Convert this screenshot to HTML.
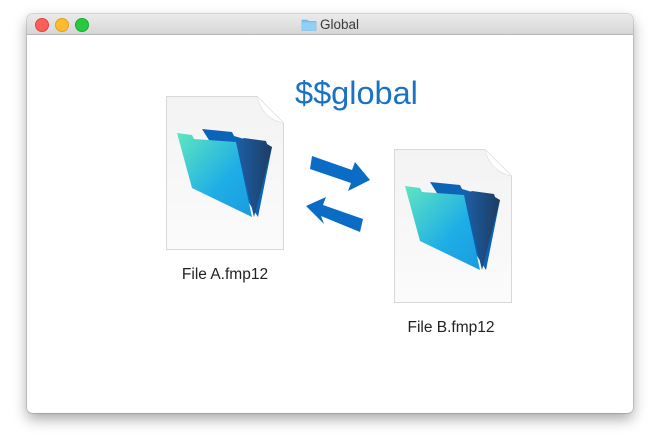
<!DOCTYPE html>
<html><head><style>
body{margin:0;width:660px;height:440px;background:#fff;overflow:hidden;font-family:"Liberation Sans",sans-serif;position:relative}
.win{position:absolute;left:27px;top:14px;width:606px;height:399px;background:#fff;border-radius:5px;box-shadow:0 6px 14px rgba(0,0,0,.35),0 0 0 .5px rgba(0,0,0,.25);overflow:hidden}
.tb{height:20px;background:linear-gradient(#ebebeb,#d6d6d6);border-bottom:1px solid #b8b8b8;position:relative}
.dot{position:absolute;top:4px;width:12px;height:12px;border-radius:50%}
.title{position:absolute;left:0;right:0;top:3px;text-align:center;font-size:13.5px;color:#3a3a3a}
.lbl{position:absolute;font-size:15.5px;color:#222;text-align:center;width:160px}
</style></head><body>
<div class="win">
<div class="tb">
<div class="dot" style="left:8px;background:#fc5f57;border:.5px solid #e0443e"></div>
<div class="dot" style="left:28px;background:#fdbc2e;border:.5px solid #dea123"></div>
<div class="dot" style="left:48px;background:#28c83f;border:.5px solid #1aab29"></div>
<div class="title"><svg width="16" height="13" viewBox="0 0 16 13" style="vertical-align:-2px;margin-right:3px"><path d="M1 2h5l1.5 1.5H15v9H1z" fill="#7cc3f2" stroke="#5aa8e0" stroke-width=".6"/><path d="M1 4.5h14v8H1z" fill="#8fd0f7"/></svg>Global</div>
</div>
</div>
<svg width="0" height="0" style="position:absolute"><defs>
<linearGradient id="g1" x1="0" y1="0" x2="1" y2="1"><stop offset="0" stop-color="#5fe6c0"/><stop offset=".6" stop-color="#1eaee6"/><stop offset="1" stop-color="#1a9be0"/></linearGradient>
<linearGradient id="g2" x1="0" y1="0" x2="1" y2="0"><stop offset="0" stop-color="#1d5fa8"/><stop offset="1" stop-color="#1d3d62"/></linearGradient>
<linearGradient id="pg" x1="0" y1="0" x2="0" y2="1"><stop offset="0" stop-color="#f3f3f3"/><stop offset="1" stop-color="#fbfbfb"/></linearGradient>
<symbol id="doc" viewBox="0 0 118 154">
<path d="M.5 .5H91L117.5 27V153.5H.5z" fill="url(#pg)" stroke="#d8d8d8"/>
<path d="M91 .5C93 12 100 24 117.5 27C108 26 97 22 91 .5z" fill="#e4e4e4"/>
<path d="M91 .5L117.5 27C105 24 95 16 91 .5z" fill="#fff" stroke="#ddd" stroke-width=".5"/>
<path d="M36 33L66 36L68 40L106 51L92 121L58 68z" fill="#0b64b8"/>
<path d="M70 46L78 42L100 45L101 48L106 51L88 121z" fill="url(#g2)"/>
<path d="M11 37L26 39L28 43L70 46L86 121L26 92z" fill="url(#g1)"/>
</symbol></defs></svg>
<svg style="position:absolute;left:166px;top:96px" width="118" height="154"><use href="#doc"/></svg>
<svg style="position:absolute;left:394px;top:149px" width="118" height="154"><use href="#doc"/></svg>
<div style="position:absolute;left:295px;top:75px;font-size:32.5px;color:#1a72c6">$$global</div>
<svg style="position:absolute;left:300px;top:150px" width="80" height="90">
<path d="M12 6L52 20L55 12L70 30L48 41L51 33L10 19z" fill="#0a6cc4"/>
<path d="M63 69L23 55L26 47L6 56L24 74L21 66L60 82z" fill="#0a6cc4"/>
</svg>
<div class="lbl" style="left:145px;top:266px">File A.fmp12</div>
<div class="lbl" style="left:371px;top:319px">File B.fmp12</div>
</body></html>
